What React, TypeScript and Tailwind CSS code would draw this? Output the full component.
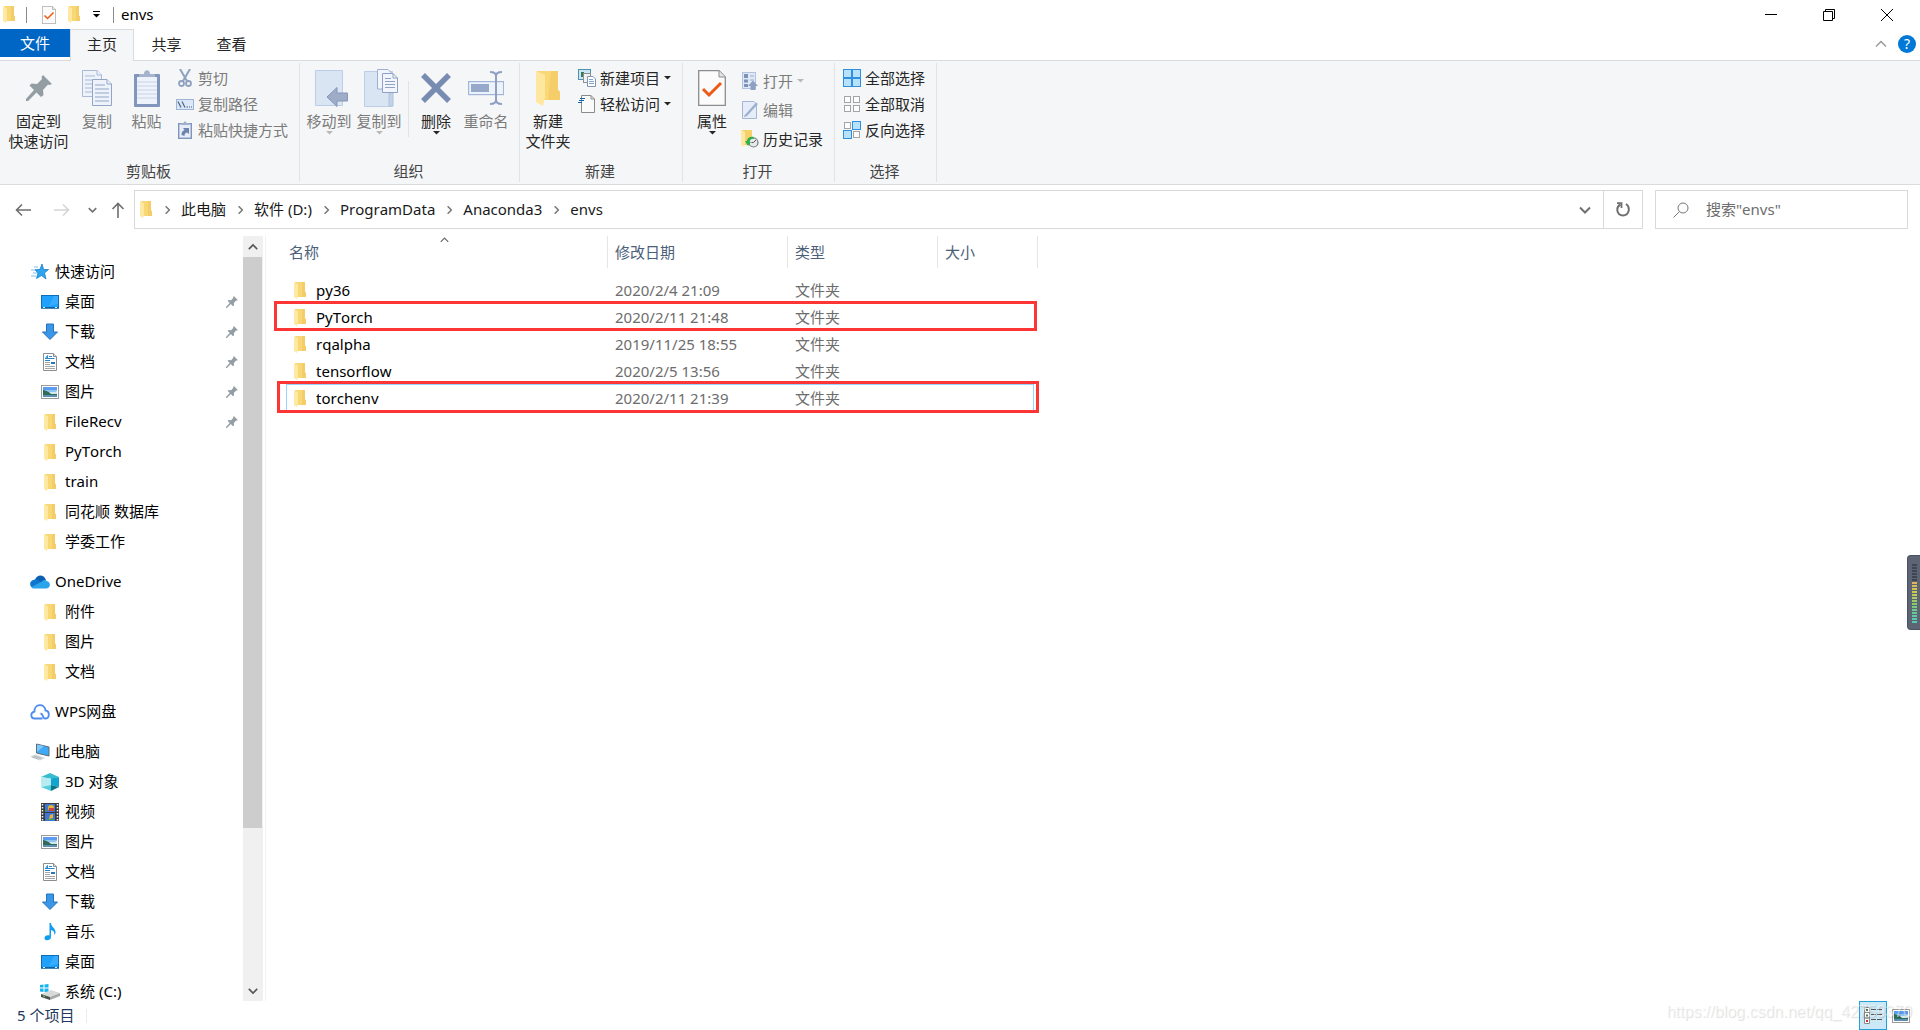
import React from 'react';

type IconProps = { className?: string };

interface NavItem {
  label: string;
  icon: React.FC<IconProps>;
  pinned?: boolean;
}

interface NavGroup extends NavItem {
  children: NavItem[];
}

interface FileRow {
  name: string;
  date: string;
  type: string;
}

/* ---------- small icons ---------- */

const Folder: React.FC<IconProps> = ({ className = 'h-[17px] w-3' }) => (
  <svg viewBox="0 0 12 17" className={className} preserveAspectRatio="none">
    <path d="M1 0H11V9.5L12 10.5V15H3Z" fill="#f8d775" />
    <path d="M8 0H11V9.5L12 10.5V15H8Z" fill="#f4cd69" />
    <path d="M0 0.5L4 2V13.5L3 17L0 15Z" fill="#ffe8a2" />
  </svg>
);

const Pin: React.FC<IconProps> = ({ className = 'h-3 w-3' }) => (
  <svg viewBox="0 0 26 26" className={className}>
    <path
      d="M17 0L26 9L23.5 10L22 9.5L17 15L17.5 20L15 22L10.500 17.500L2 26L0 26L0 24L8 15L3.500 10.500L5.500 8.500L11 9L16 4L15.500 2Z"
      fill="#939da4"
    />
  </svg>
);

const Star: React.FC<IconProps> = () => (
  <svg viewBox="0 0 18 16" className="h-4 w-[18px]">
    <path d="M11 0L12.600 5.500H17.500L13.500 9L15 15L10.500 11.500L5.500 14.500L7 9L4 5.800L9 5.300Z" fill="#2ea3f2" stroke="#1b7fc6" strokeWidth=".8" />
    <path d="M3 3H7M0 6H4M2 9H6M0 12H5" stroke="#7dbff0" strokeWidth="1" />
  </svg>
);

const Desktop: React.FC<IconProps> = () => (
  <svg viewBox="0 0 18 14" className="h-3.5 w-[18px]">
    <rect x=".5" y=".5" width="17" height="12" fill="#1ea0fb" stroke="#0c6fb8" />
    <path d="M13 1H17V9L8 11Z" fill="#43b1ff" opacity=".7" />
    <path d="M0 13H18" stroke="#0a5c9c" strokeWidth="1.500" />
    <path d="M2 12.500H4M14 12.500H16" stroke="#d8efff" strokeWidth="1" />
  </svg>
);

const Download: React.FC<IconProps> = () => (
  <svg viewBox="0 0 18 18" className="h-[18px] w-[18px]">
    <path d="M5.500 1H12.500V9H16.500L9 16.500L1.500 9H5.500Z" fill="#3b96e6" stroke="#2374bf" strokeWidth="1" />
  </svg>
);

const Document: React.FC<IconProps> = () => (
  <svg viewBox="0 0 16 18" className="h-[18px] w-4">
    <path d="M1.500 .5H11.500L14.500 3.500V17.500H1.500Z" fill="#fff" stroke="#8b8f93" />
    <path d="M11.500 .5V3.500H14.500" fill="#ddd" stroke="#8b8f93" />
    <path d="M3.500 5.500L5.500 2.500V5.500M7 3.500H10M3 5.500H12.500M3 7.500H8" stroke="#2288cf" fill="none" />
    <rect x="9" y="9" width="4" height="2" fill="#237ab8" />
    <path d="M3 9.500H8M3 11.500H8M3 13.500H13M3 15.500H13" stroke="#a5a5a5" />
  </svg>
);

const Picture: React.FC<IconProps> = () => (
  <svg viewBox="0 0 18 14" className="h-3.5 w-[18px]">
    <rect x=".5" y=".5" width="17" height="13" fill="#fff" stroke="#9a9a9a" />
    <rect x="2" y="2" width="14" height="10" fill="#8fc5ee" />
    <rect x="2" y="2" width="14" height="3" fill="#5b9bf0" />
    <path d="M2 5C6 5 8 9 16 9V10H2Z" fill="#2f6b58" />
    <path d="M8 7H14L16 6V9H10Z" fill="#d5e8ee" />
    <path d="M2 10H16V12H2Z" fill="#5d8fae" />
  </svg>
);

const OneDrive: React.FC<IconProps> = () => (
  <svg viewBox="0 0 20 14" className="h-3.5 w-5">
    <path d="M5 5C6.500 -.5 13.500 -1.500 16 5L12 9Z" fill="#0a5fb3" />
    <path d="M4 13C-1 12.500-1.500 5.500 4.500 4.500C7 4 9 5.500 12 7L6 13Z" fill="#0f77d0" />
    <path d="M12 6.500C13.500 4.500 16 4.500 16.500 6C21 6.500 21 13 16.500 13.500H4C3 13.500 2 13 1.500 12Z" fill="#2aa5ec" />
  </svg>
);

const WpsCloud: React.FC<IconProps> = () => (
  <svg viewBox="0 0 20 16" className="h-4 w-5" fill="none" stroke="#4f8cf0" strokeWidth="1.800">
    <path d="M12.500 14.500H4.500C.5 14.500 0 8.500 4.500 7.500C4 -.5 15 -1 15.500 6.500C20 7 20 14.500 15 14.500C12 14.500 14 10 10.500 9.500" />
  </svg>
);

const Computer: React.FC<IconProps> = () => (
  <svg viewBox="0 0 20 18" className="h-[18px] w-5">
    <path d="M6.500 1L19 4V13L6.500 10Z" fill="#3fa9f5" stroke="#5c6c78" strokeWidth="1" />
    <path d="M7 1.500L14 3L7 9Z" fill="#7cc8fb" />
    <path d="M0 13.500L6 11.500L15 15L10 17.500Z" fill="#cfd4d8" />
    <path d="M2 14L8 16M4 13L11 15.500" stroke="#a9b0b5" strokeWidth=".8" />
  </svg>
);

const Cube: React.FC<IconProps> = () => (
  <svg viewBox="0 0 18 18" className="h-[18px] w-[18px]">
    <path d="M0 4L9 0L18 4L10 6Z" fill="#38bcd0" />
    <path d="M0 4L10 5.500V12L0 14Z" fill="#b9ecf0" />
    <path d="M10 5.500L18 4V14L10 12Z" fill="#13a4cf" />
    <path d="M0 14L10 12V18Z" fill="#52cfdd" />
    <path d="M10 12L18 14L10 18Z" fill="#0b7689" />
  </svg>
);

const Video: React.FC<IconProps> = () => (
  <svg viewBox="0 0 18 18" className="h-[18px] w-[18px]">
    <rect width="18" height="18" fill="#3b3b3b" />
    <rect x="4" y="1" width="10" height="8" fill="#4076d8" />
    <rect x="4" y="10" width="10" height="8" fill="#4076d8" />
    <circle cx="10" cy="5" r="3" fill="#e2b62f" />
    <path d="M8 5H13V8H8Z" fill="#c9443c" />
    <path d="M9 12L12 11V15L8 16Z" fill="#e2b62f" />
    <path d="M4 6L7 8H4ZM5 17H13V16H7Z" fill="#3da54b" />
    <path d="M1.500 1V18M16.500 1V18" stroke="#f4f4f4" strokeWidth="1.500" strokeDasharray="1.500 1.500" />
  </svg>
);

const Music: React.FC<IconProps> = () => (
  <svg viewBox="0 0 14 18" className="h-[18px] w-3.5">
    <path d="M6.500 0H8C8 4 13 5 12.500 10C12 11 11.500 11.500 11 12C12 8.500 10 7.500 8 7V14C8 17.500 2 18.500 1.500 15.500C1.300 13 4 11.500 6.500 12.500Z" fill="#109cf1" />
  </svg>
);

const Drive: React.FC<IconProps> = () => (
  <svg viewBox="0 0 20 16" className="h-4 w-5">
    <path d="M0 1L3.500 .5V3.500H0ZM4.500 .4L8.500 0V3.500H4.500ZM0 4.500H3.500V8L0 7.500ZM4.500 4.500H8.500V8.500L4.500 8Z" fill="#16b4ee" />
    <path d="M1 10L11 6L20 9L10 13Z" fill="#d9d9d9" />
    <path d="M1 10L10 13V16L1 13Z" fill="#4b4f52" />
    <path d="M10 13L20 9V12L10 16Z" fill="#a6a8aa" />
    <path d="M3 12L5 12.600" stroke="#5be35b" />
  </svg>
);

const CheckDoc: React.FC<IconProps> = ({ className }) => (
  <svg viewBox="0 0 28 36" className={className}>
    <path d="M.7 .7H21L27.300 7V35.300H.7Z" fill="#fbfbfb" stroke="#8d8d8d" strokeWidth="1.300" />
    <path d="M21 .7V7H27.300" fill="#e4e4e4" stroke="#8d8d8d" />
    <path d="M5 19L11 25L23 13" stroke="#ee5914" strokeWidth="3" fill="none" />
  </svg>
);

/* ---------- chevrons and arrows ---------- */

const Caret: React.FC<IconProps> = ({ className = 'text-black' }) => (
  <svg viewBox="0 0 7 4" className={`h-1 w-[7px] ${className}`}>
    <path d="M0 0H7L3.500 3.500Z" fill="currentColor" />
  </svg>
);

const Chevron: React.FC<IconProps> = ({ className = '' }) => (
  <svg viewBox="0 0 12 8" className={className} fill="none" stroke="currentColor">
    <path d="M1 1.500L6 6.500L11 1.500" />
  </svg>
);

const Arrow: React.FC<IconProps> = ({ className = '' }) => (
  <svg viewBox="0 0 16 14" className={className} fill="none" stroke="currentColor" strokeWidth="1.600">
    <path d="M16 7H1.500M7 1.500L1.500 7L7 12.500" />
  </svg>
);

/* ---------- ribbon icons ---------- */

const CopyIcon = () => (
  <svg viewBox="0 0 30 36" className="h-9 w-[30px]" stroke="#a9b9d6" fill="#edf2fb">
    <path d="M.5 .5H15L19.500 5V26.500H.5Z" />
    <path d="M15 .5V5H19.500M3 6H13M3 10H16M3 14H16M3 18H16M3 22H10" />
    <path d="M10.500 9.500H25L29.500 14V35.500H10.500Z" stroke="#93a5c6" />
    <path d="M25 9.500V14H29.500M13 15H23M13 19H27M13 23H27M13 27H27M13 31H27" stroke="#93a5c6" />
  </svg>
);

const PasteIcon = () => (
  <svg viewBox="0 0 26 37" className="h-[37px] w-[26px]">
    <rect y="4" width="26" height="33" rx="1" fill="#8296bd" />
    <rect x="3" y="7" width="20" height="27" fill="#eef2fa" />
    <path d="M3 12H23M3 16H23M3 20H23M3 24H23M3 28H23" stroke="#c8d3e6" />
    <path d="M5 7V4H10C10 -1 16 -1 16 4H21V7Z" fill="#a5b3cd" />
  </svg>
);

const MoveIcon = () => (
  <svg viewBox="0 0 33 38" className="ml-1 h-[38px] w-[33px]">
    <path d="M.5 1.500H27.500V36.500H.5Z" fill="#dae5f4" stroke="#bdcde6" />
    <path d="M12 28L22 18.500V24H32.500V32H22V37.500Z" fill="#9eacc8" stroke="#8596b8" />
  </svg>
);

const CopyToIcon = () => (
  <svg viewBox="0 0 34 38" className="ml-1 h-[38px] w-[34px]">
    <path d="M.5 2.500H28.500V37.500H.5Z" fill="#dae5f4" stroke="#bdcde6" />
    <path d="M25 24H29V37H25Z" fill="#c5d3e9" stroke="#b1c2de" />
    <path d="M13.500 .5H24L27.500 4V20H13.500Z" fill="#f2f5fb" stroke="#9eb0cf" />
    <path d="M18.500 4.500H29L33.500 9V23.500H18.500Z" fill="#f2f5fb" stroke="#8fa2c4" />
    <path d="M29 4.500V9H33.500M21 9.500H27M21 12.500H31M21 15.500H31M21 18.500H31" stroke="#8fa2c4" fill="none" />
  </svg>
);

const DeleteIcon = () => (
  <svg viewBox="0 0 32 32" className="h-8 w-8">
    <path d="M3 3L29 29M29 3L3 29" stroke="#788bb0" strokeWidth="5.500" />
  </svg>
);

const RenameIcon = () => (
  <svg viewBox="0 0 36 34" className="h-[34px] w-9">
    <rect x=".6" y="10.600" width="35" height="13" fill="#edf3fb" stroke="#a1b6d8" strokeWidth="1.200" />
    <rect x="3" y="13" width="18" height="8" fill="#97a9ca" />
    <path d="M22 1C25 1 28 2 28 5C28 2 31 1 34 1M28 4V30M22 33C25 33 28 32 28 29C28 32 31 33 34 33" fill="none" stroke="#8ea0c2" strokeWidth="2" />
  </svg>
);

const NewFolderIcon = () => (
  <svg viewBox="0 0 25 35" className="h-[35px] w-[25px]">
    <path d="M1 0H22V19L24 21V29H5Z" fill="#f9d878" />
    <path d="M15 0H22V19L24 21V29H12Z" fill="#f5ce69" />
    <path d="M0 0L9 4V26L7 35L0 31Z" fill="#ffe7a0" />
  </svg>
);

const ScissorsIcon = () => (
  <svg viewBox="0 0 14 18" className="h-[18px] w-3.5" fill="none" stroke="#8fa1c0">
    <path d="M2 0L9 12M12 0L5 12" strokeWidth="2" />
    <circle cx="3.500" cy="14.500" r="2.500" strokeWidth="1.800" />
    <circle cx="10.500" cy="14.500" r="2.500" strokeWidth="1.800" />
  </svg>
);

const PathIcon = () => (
  <svg viewBox="0 0 18 11" className="h-[11px] w-[18px]">
    <rect x=".5" y=".5" width="17" height="10" fill="#dce7f7" stroke="#9fb3d5" />
    <path d="M2 2.500L5 8.500M6 2.500L9 8.500M10.500 8H12M13 8H14M15 8H16" stroke="#4d6289" strokeWidth="1.200" />
  </svg>
);

const ShortcutIcon = () => (
  <svg viewBox="0 0 14 18" className="h-[18px] w-3.5">
    <rect x=".7" y="2.700" width="12.600" height="14.600" fill="#e6edf8" stroke="#8195bc" strokeWidth="1.400" />
    <path d="M3 4V2H5.500C5.500 0 8.500 0 8.500 2H11V4Z" fill="#a0b0cd" />
    <path d="M3.500 14C3.500 11 4.500 10 6.500 9L5 7H11V13L9 11.500C7 12 6.500 13 6.500 15Z" fill="#6e84ae" />
  </svg>
);

const NewItemIcon = () => (
  <svg viewBox="0 0 18 18" className="h-[18px] w-[18px]">
    <rect x=".5" y=".5" width="12" height="10" fill="#c9e6f4" stroke="#4d91b0" />
    <rect x="3" y="3" width="3" height="5" fill="#35795c" />
    <rect x="5.500" y="4.500" width="7" height="9" fill="#f1f1f1" stroke="#8f8f8f" />
    <path d="M9.500 7.500H15L17.500 10V17.500H9.500Z" fill="#fff" stroke="#8495ae" />
    <path d="M11 10.500H15M11 12.500H16M11 14.500H16" stroke="#7ba7d8" />
  </svg>
);

const EasyAccessIcon = () => (
  <svg viewBox="0 0 18 18" className="h-[18px] w-[18px]">
    <path d="M3.500 .5H13L16.500 4V17.500H3.500Z" fill="#fafafa" stroke="#8b8b8b" />
    <path d="M13 .5V4H16.500" fill="none" stroke="#8b8b8b" />
    <path d="M2 3.500H7M1 5.500H6M0 7.500H4" stroke="#1767ae" />
  </svg>
);

const OpenIcon = () => (
  <svg viewBox="0 0 16 18" className="h-[18px] w-4">
    <rect x=".5" y=".5" width="13" height="16" fill="#dfe8f5" stroke="#b3c2dc" />
    <path d="M2 2H6V6H2ZM2 7.500H6V10.500H2ZM2 12H6V15H2Z" fill="#7e92b8" />
    <path d="M8 4H12M8 8H12" stroke="#9baecb" />
    <path d="M11 8.500L16 14H13.500V18H8.500V14H6Z" fill="#8fa1c3" />
  </svg>
);

const EditIcon = () => (
  <svg viewBox="0 0 16 18" className="h-[18px] w-4">
    <path d="M.5 .5H12L14.500 3V17.500H.5Z" fill="#e6edf8" stroke="#a6b7d5" />
    <path d="M2 15L14 1.500L16 3L5 15L2 16Z" fill="#9db0d0" />
  </svg>
);

const HistoryIcon = () => (
  <svg viewBox="0 0 18 18" className="h-[18px] w-[18px]">
    <path d="M1 0H11V9H13V15H3Z" fill="#f6d06b" />
    <path d="M0 0L4 2V13L3 17L0 15Z" fill="#ffe8a2" />
    <circle cx="12.500" cy="12.500" r="4.500" fill="#e6e9ea" stroke="#77797a" strokeWidth="1.200" />
    <path d="M12.500 12.500L15 10M12.500 12.500H10.500" stroke="#555" />
    <path d="M13 7C9 6 6 8 6 11L4 11L7 16L10 12H8.500C8.500 9.500 10 8.500 13 8.500Z" fill="#2bb24c" />
  </svg>
);

const tile = { on: ['#b8e1fb', '#2f8fe0'], off: ['#fdfdfd', '#a4a4a4'] };

// four tiles, each one either lit or empty
const Tiles: React.FC<{ lit: boolean[] }> = ({ lit }) => (
  <svg viewBox="0 0 18 18" className="h-[18px] w-[18px]">
    {lit.map((isOn, i) => {
      const [fill, stroke] = isOn ? tile.on : tile.off;
      const size = isOn ? 8 : 6;
      const pad = isOn ? 0.5 : 1.5;
      return (
        <rect key={i} x={(i % 2) * 9 + pad} y={Math.floor(i / 2) * 9 + pad} width={size} height={size} fill={fill} stroke={stroke} />
      );
    })}
  </svg>
);

/* ---------- data ---------- */

const NAV: NavGroup[] = [
  {
    label: '快速访问',
    icon: Star,
    children: [
      { label: '桌面', icon: Desktop, pinned: true },
      { label: '下载', icon: Download, pinned: true },
      { label: '文档', icon: Document, pinned: true },
      { label: '图片', icon: Picture, pinned: true },
      { label: 'FileRecv', icon: Folder, pinned: true },
      { label: 'PyTorch', icon: Folder },
      { label: 'train', icon: Folder },
      { label: '同花顺 数据库', icon: Folder },
      { label: '学委工作', icon: Folder },
    ],
  },
  {
    label: 'OneDrive',
    icon: OneDrive,
    children: [
      { label: '附件', icon: Folder },
      { label: '图片', icon: Folder },
      { label: '文档', icon: Folder },
    ],
  },
  { label: 'WPS网盘', icon: WpsCloud, children: [] },
  {
    label: '此电脑',
    icon: Computer,
    children: [
      { label: '3D 对象', icon: Cube },
      { label: '视频', icon: Video },
      { label: '图片', icon: Picture },
      { label: '文档', icon: Document },
      { label: '下载', icon: Download },
      { label: '音乐', icon: Music },
      { label: '桌面', icon: Desktop },
      { label: '系统 (C:)', icon: Drive },
    ],
  },
];

const FILES: FileRow[] = [
  { name: 'py36', date: '2020/2/4 21:09', type: '文件夹' },
  { name: 'PyTorch', date: '2020/2/11 21:48', type: '文件夹' },
  { name: 'rqalpha', date: '2019/11/25 18:55', type: '文件夹' },
  { name: 'tensorflow', date: '2020/2/5 13:56', type: '文件夹' },
  { name: 'torchenv', date: '2020/2/11 21:39', type: '文件夹' },
];

const CRUMBS = ['此电脑', '软件 (D:)', 'ProgramData', 'Anaconda3', 'envs'];

const METER = [
  '#3e4654', '#3e4654', '#3e4654', '#3e4654', '#3e4654', '#3e4654',
  '#e0b45a', '#dcba56', '#d5c254', '#cbcb53', '#bccf56', '#adcf5d', '#9bcd66', '#8bcb70',
  '#7dca7c', '#70ca89', '#66ca97', '#5fcaa4', '#5acab0', '#56c9b8',
];

/* ---------- ribbon parts ---------- */

interface GroupProps {
  label: string;
  className: string;
  inner?: string;
  children: React.ReactNode;
}

const Group: React.FC<GroupProps> = ({ label, className, inner = '', children }) => (
  <section className={`my-0.5 flex shrink-0 flex-col border-r border-[#e2e3e4] ${className}`}>
    <div className={`flex flex-1 items-start pt-0.5 ${inner}`}>{children}</div>
    <div className="pr-0.5 pb-px text-center leading-5 text-[#444]">{label}</div>
  </section>
);

interface BigButtonProps {
  lines: string[];
  className: string;
  disabled?: boolean;
  caret?: boolean;
  children: React.ReactNode;
}

const BigButton: React.FC<BigButtonProps> = ({ lines, className, disabled, caret, children }) => (
  <button
    type="button"
    disabled={disabled}
    className={`flex shrink-0 flex-col items-center pt-[3px] whitespace-nowrap ${disabled ? 'text-[#7b7b7b]' : 'text-[#262626]'} ${className}`}
  >
    <span className="mb-[3px] flex h-10 items-center">{children}</span>
    {lines.map((line) => (
      <span key={line} className="leading-5">{line}</span>
    ))}
    {caret && <Caret className={disabled ? 'text-[#b9b9b9]' : 'text-[#262626]'} />}
  </button>
);

interface SmallButtonProps {
  label: string;
  disabled?: boolean;
  caret?: boolean;
  className?: string;
  children: React.ReactNode;
}

const SmallButton: React.FC<SmallButtonProps> = ({ label, disabled, caret, className = 'h-[26px]', children }) => (
  <button
    type="button"
    disabled={disabled}
    className={`flex items-center gap-1 whitespace-nowrap ${disabled ? 'text-[#7b7b7b]' : 'text-[#262626]'} ${className}`}
  >
    <span className="flex w-[18px] justify-center">{children}</span>
    <span>{label}</span>
    {caret && <Caret className={disabled ? 'text-[#b9b9b9]' : 'text-[#262626]'} />}
  </button>
);

const Ribbon = () => (
  <div className="flex h-[125px] shrink-0 border-y border-[#dadbdc] bg-[#f5f6f7]">
    <Group label="剪贴板" className="w-[300px]">
      <BigButton lines={['固定到', '快速访问']} className="w-[77px]"><Pin className="h-[26px] w-[26px]" /></BigButton>
      <BigButton lines={['复制']} disabled className="w-10"><CopyIcon /></BigButton>
      <BigButton lines={['粘贴']} disabled className="w-[59px]"><PasteIcon /></BigButton>
      <div className="flex flex-col">
        <SmallButton label="剪切" disabled><ScissorsIcon /></SmallButton>
        <SmallButton label="复制路径" disabled><PathIcon /></SmallButton>
        <SmallButton label="粘贴快捷方式" disabled><ShortcutIcon /></SmallButton>
      </div>
    </Group>

    <Group label="组织" className="w-[220px]" inner="pl-1">
      <BigButton lines={['移动到']} disabled caret className="w-[50px]"><MoveIcon /></BigButton>
      <BigButton lines={['复制到']} disabled caret className="w-[50px]"><CopyToIcon /></BigButton>
      <div className="mx-1 mt-4 h-14 w-px bg-[#e2e3e4]" />
      <BigButton lines={['删除']} caret className="w-[46px]"><DeleteIcon /></BigButton>
      <BigButton lines={['重命名']} disabled className="w-[54px]"><RenameIcon /></BigButton>
    </Group>

    <Group label="新建" className="w-[163px]">
      <BigButton lines={['新建', '文件夹']} className="w-14"><NewFolderIcon /></BigButton>
      <div className="flex flex-col pl-0.5">
        <SmallButton label="新建项目" caret><NewItemIcon /></SmallButton>
        <SmallButton label="轻松访问" caret><EasyAccessIcon /></SmallButton>
      </div>
    </Group>

    <Group label="打开" className="w-[152px]">
      <BigButton lines={['属性']} caret className="w-[58px]"><CheckDoc className="h-9 w-7" /></BigButton>
      <div className="flex flex-col pt-px">
        <SmallButton label="打开" disabled caret className="h-[29px]"><OpenIcon /></SmallButton>
        <SmallButton label="编辑" disabled className="h-[29px]"><EditIcon /></SmallButton>
        <SmallButton label="历史记录" className="h-[29px]"><HistoryIcon /></SmallButton>
      </div>
    </Group>

    <Group label="选择" className="w-[102px]" inner="pl-2">
      <div className="flex flex-col">
        <SmallButton label="全部选择"><Tiles lit={[true, true, true, true]} /></SmallButton>
        <SmallButton label="全部取消"><Tiles lit={[false, false, false, false]} /></SmallButton>
        <SmallButton label="反向选择"><Tiles lit={[false, true, true, false]} /></SmallButton>
      </div>
    </Group>
  </div>
);

/* ---------- window chrome ---------- */

const TitleBar = () => (
  <header className="flex h-[29px] shrink-0 items-center text-black">
    <div className="flex flex-1 items-center pl-[3px]">
      <Folder />
      <span className="ml-[11px] h-4 w-px bg-[#8a8a8a]" />
      <button type="button" aria-label="属性" className="ml-[15px]"><CheckDoc className="h-[18px] w-3.5" /></button>
      <button type="button" aria-label="新建文件夹" className="ml-3"><Folder /></button>
      <button type="button" aria-label="自定义快速访问工具栏" className="ml-[13px] flex flex-col items-center gap-0.5">
        <span className="h-px w-[7px] bg-black" />
        <Caret />
      </button>
      <span className="ml-[13px] h-4 w-px bg-[#8a8a8a]" />
      <h1 className="ml-[7px] pb-0.5">envs</h1>
    </div>
    <button type="button" aria-label="最小化" className="flex w-[58px] justify-center">
      <span className="h-px w-3 bg-black" />
    </button>
    <button type="button" aria-label="还原" className="flex w-[58px] justify-center">
      <svg viewBox="0 0 12 12" className="h-3 w-3" fill="none" stroke="#000">
        <path d="M.5 2.500H9.500V11.500H.5ZM2.500 2.500V.5H11.500V9.500H9.500" />
      </svg>
    </button>
    <button type="button" aria-label="关闭" className="mr-1 flex w-[58px] justify-center">
      <svg viewBox="0 0 12 12" className="h-3 w-3" stroke="#000">
        <path d="M0 0L12 12M12 0L0 12" />
      </svg>
    </button>
  </header>
);

const Tabs = () => (
  <nav className="relative z-10 -mb-px flex h-8 shrink-0 items-start text-[#262626]">
    <button type="button" className="h-7 w-[70px] bg-[#0066c5] text-white">文件</button>
    <button type="button" className="h-8 w-16 border border-b-0 border-[#dadbdc] bg-[#f5f6f7] pb-[3px]">主页</button>
    <button type="button" className="h-[30px] w-[65px]">共享</button>
    <button type="button" className="h-[30px] w-[65px]">查看</button>
    <div className="ml-auto flex h-[30px] items-center gap-[11px] pr-1">
      <button type="button" aria-label="最小化功能区"><Chevron className="h-2 w-3 rotate-180 stroke-[1.5] text-[#9a9a9a]" /></button>
      <button type="button" aria-label="帮助" className="h-[18px] w-[18px] rounded-full bg-[#0078d7] text-sm leading-[18px] text-white">?</button>
    </div>
  </nav>
);

const AddressBar = () => (
  <div className="flex h-[51px] shrink-0 items-start pt-[5px] pr-3">
    <div className="flex h-[39px] w-[134px] shrink-0 items-center text-[#6f6f6f]">
      <button type="button" aria-label="后退" className="ml-[15px]"><Arrow className="h-3.5 w-4" /></button>
      <button type="button" aria-label="前进" disabled className="ml-[23px]"><Arrow className="h-3.5 w-4 rotate-180 text-[#d5d5d5]" /></button>
      <button type="button" aria-label="最近浏览的位置" className="ml-[18px]"><Chevron className="h-1.5 w-[9px] stroke-2" /></button>
      <button type="button" aria-label="上移" className="ml-[13px]"><Arrow className="h-3.5 w-4 rotate-90" /></button>
    </div>
    <div className="flex h-[39px] flex-1 items-center border border-[#d9d9d9] text-[#1a1a1a]">
      <span className="mr-[9px] ml-[5px]"><Folder /></span>
      {CRUMBS.map((crumb) => (
        <React.Fragment key={crumb}>
          <Chevron className="mr-[9px] ml-0.5 h-1.5 w-[9px] -rotate-90 stroke-2 text-[#777]" />
          <button type="button" className="mr-2 pb-0.5">{crumb}</button>
        </React.Fragment>
      ))}
      <button type="button" aria-label="以前的位置" className="mr-3 ml-auto"><Chevron className="h-2 w-3 stroke-2 text-[#6f6f6f]" /></button>
      <button type="button" aria-label="刷新" className="flex h-full w-[39px] items-center justify-center border-l border-[#d9d9d9]">
        <svg viewBox="0 0 14 15" className="h-[15px] w-3.5" fill="none" stroke="#707070" strokeWidth="2">
          <path d="M10 2C14.500 5 13.500 13.500 7 13.500C.5 13.500-.5 5 4.500 2.500" />
          <path d="M1 1.200H5.500V6" strokeWidth="1.800" />
        </svg>
      </button>
    </div>
    <label className="ml-3 flex h-[39px] w-[253px] shrink-0 items-center border border-[#d9d9d9] pl-[17px]">
      <svg viewBox="0 0 16 16" className="h-4 w-4 shrink-0" fill="none" stroke="#777">
        <circle cx="10" cy="6" r="5" />
        <path d="M6.500 9.500L.5 15.500" />
      </svg>
      <input type="text" placeholder={'搜索"envs"'} aria-label="搜索" className="ml-[17px] min-w-0 flex-1 pb-0.5 outline-none placeholder:text-[#6d6d6d]" />
    </label>
  </div>
);

const Sidebar = () => (
  <aside className="flex w-[266px] shrink-0 border-r border-[#f2f2f2]">
    <nav className="flex-1 overflow-hidden pt-[21px] text-black">
      {NAV.map(({ label, icon: GroupIcon, children }) => (
        <div key={label} className="mb-2.5">
          <a href="#" className="flex h-[30px] items-center gap-[5px] pl-[30px]">
            <span className="flex w-5 justify-center"><GroupIcon /></span>
            <span className="pb-0.5">{label}</span>
          </a>
          {children.map(({ label: text, icon: ItemIcon, pinned }) => (
            <a key={text} href="#" className="flex h-[30px] items-center gap-[5px] pr-[5px] pl-10">
              <span className="flex w-5 justify-center"><ItemIcon /></span>
              <span className="flex-1 pb-0.5">{text}</span>
              {pinned && <Pin />}
            </a>
          ))}
        </div>
      ))}
    </nav>
    <div className="mr-0.5 flex w-5 flex-col bg-[#f0f0f0] text-[#555]">
      <button type="button" aria-label="向上滚动" className="flex h-[21px] shrink-0 items-center justify-center pr-px">
        <Chevron className="h-2 w-2.5 rotate-180 stroke-2" />
      </button>
      <div className="flex-1"><div className="mr-px h-[79%] bg-[#cdcdcd]" /></div>
      <button type="button" aria-label="向下滚动" className="flex h-[21px] shrink-0 items-center justify-center pr-px">
        <Chevron className="h-2 w-2.5 stroke-2" />
      </button>
    </div>
  </aside>
);

const FileList = () => (
  <main className="relative flex-1">
    <table className="table-fixed border-separate border-spacing-0 text-left">
      <thead className="text-[#4c607a]">
        <tr>
          <th className="relative h-8 w-[342px] border-r border-[#e5e5e5] pl-[23px] font-normal">
            名称
            <Chevron className="absolute top-px left-[174px] h-1.5 w-[9px] rotate-180 stroke-[1.5] text-[#666]" />
          </th>
          <th className="w-[180px] border-r border-[#e5e5e5] pl-[7px] font-normal">修改日期</th>
          <th className="w-[150px] border-r border-[#e5e5e5] pl-[7px] font-normal">类型</th>
          <th className="w-[100px] border-r border-[#e5e5e5] pl-[7px] font-normal">大小</th>
        </tr>
      </thead>
      <tbody className="text-[#6d6d6d] before:block before:h-[9px] before:content-['']">
        {FILES.map((file) => (
          <tr key={file.name}>
            <td className="h-[27px] pl-7">
              <span className="flex items-center gap-2.5 text-black">
                <Folder />
                <span className="pb-0.5">{file.name}</span>
              </span>
            </td>
            <td className="pb-0.5 pl-[7px]">{file.date}</td>
            <td className="pb-0.5 pl-[7px]">{file.type}</td>
            <td />
          </tr>
        ))}
      </tbody>
    </table>
    {/* focus rectangle and the two red markers drawn over the rows */}
    <div className="pointer-events-none absolute top-[148px] left-5 h-[27px] w-[748px] border border-[#99d1ff]" />
    <div className="pointer-events-none absolute top-[65px] left-2 h-[30px] w-[763px] border-3 border-[#fd3535]" />
    <div className="pointer-events-none absolute top-[145px] left-[11px] h-8 w-[762px] border-3 border-[#fd3535]" />
  </main>
);

const StatusBar = () => (
  <footer className="relative flex h-[29px] shrink-0 items-center pr-2.5 pl-[17px] text-[#1e395b]">
    <span className="pb-0.5">5 个项目</span>
    <span className="ml-3 h-3.5 w-px bg-[#ececec]" />
    <button type="button" aria-label="详细信息" className="ml-auto flex h-[29px] w-7 items-center justify-center border border-[#26a0da] bg-[#cbe8f6]">
      <svg viewBox="0 0 18 17" className="h-[17px] w-[18px]" fill="#fff" stroke="#8a8a8a">
        <path d="M.5 .5H5.500V5.500H.5ZM.5 5.500H5.500V11H.5ZM.5 11H5.500V16.500H.5Z" />
        <path d="M7 2.500H12M13 2.500H18M7 7.500H12M13 7.500H18M7 12.500H12M13 12.500H18" stroke="#555" />
        <path d="M2 3H4M2 8.500H4" stroke="#4b7d5a" strokeWidth="2" />
        <path d="M2 14H4" stroke="#c33" strokeWidth="2" />
      </svg>
    </button>
    <button type="button" aria-label="大缩略图" className="ml-[5px]"><Picture /></button>
    <span className="pointer-events-none absolute top-0 right-2 font-['Liberation_Sans'] text-base leading-[22px] text-white/50 [text-shadow:1px_1px_1px_#00000022]">
      https://blog.csdn.net/qq_42759370
    </span>
  </footer>
);

const VolumeMeter = () => (
  <div className="absolute top-[555px] right-0 flex h-[75px] w-[13px] flex-col items-end gap-px rounded-l border border-r-0 border-[#4a5160] bg-[#5d6575] pt-2 pr-[3px]">
    {METER.map((color, i) => (
      <span key={i} className="h-0.5 w-[5px]" style={{ backgroundColor: color }} />
    ))}
  </div>
);

const App: React.FC = () => {
  return (
    <div className="relative flex h-screen flex-col overflow-hidden bg-white font-['Noto_Sans','Noto_Sans_CJK_SC',sans-serif] text-[15px] leading-5 [font-kerning:none]">
      <TitleBar />
      <Tabs />
      <Ribbon />
      <AddressBar />
      <div className="flex min-h-0 flex-1">
        <Sidebar />
        <FileList />
      </div>
      <StatusBar />
      <VolumeMeter />
    </div>
  );
};

export default App;
